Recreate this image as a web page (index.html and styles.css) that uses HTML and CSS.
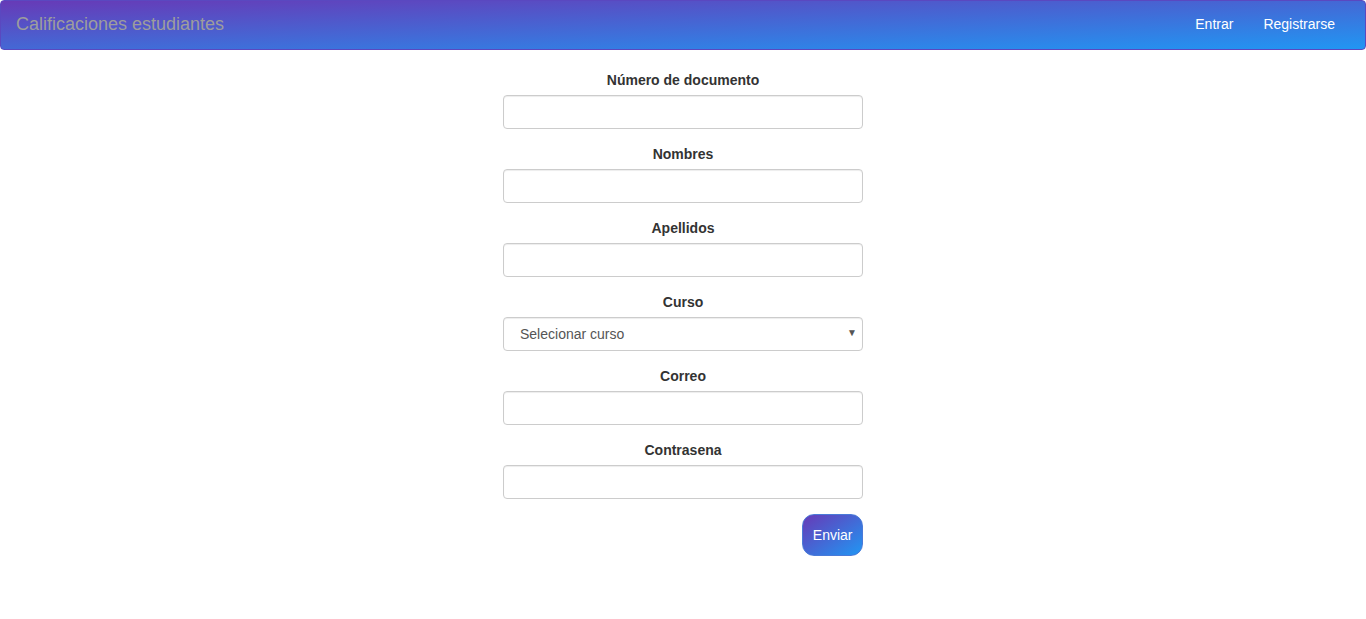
FILE: index.html
```html
<!DOCTYPE html>
<html lang="es">
<head>
<meta charset="utf-8">
<title>Calificaciones estudiantes</title>
<link rel="stylesheet" href="styles.css">
</head>
<body>
<nav class="navbar">
  <a class="brand" href="#">Calificaciones estudiantes</a>
  <ul class="nav-links">
    <li><a href="#">Entrar</a></li>
    <li><a href="#">Registrarse</a></li>
  </ul>
</nav>
<main class="content">
  <form class="form">
    <div class="group">
      <label for="doc">Número de documento</label>
      <input id="doc" type="text" class="control">
    </div>
    <div class="group">
      <label for="nom">Nombres</label>
      <input id="nom" type="text" class="control">
    </div>
    <div class="group">
      <label for="ape">Apellidos</label>
      <input id="ape" type="text" class="control">
    </div>
    <div class="group">
      <label for="cur">Curso</label>
      <div class="select-wrap">
        <select id="cur" class="control select">
          <option>Selecionar curso</option>
        </select>
        <span class="caret">&#9660;</span>
      </div>
    </div>
    <div class="group">
      <label for="cor">Correo</label>
      <input id="cor" type="email" class="control">
    </div>
    <div class="group">
      <label for="con">Contrasena</label>
      <input id="con" type="password" class="control">
    </div>
    <div class="actions">
      <button type="button" class="btn">Enviar</button>
    </div>
  </form>
</main>
</body>
</html>
```
FILE: styles.css
```css
* { box-sizing: border-box; }
html, body { margin: 0; padding: 0; }
body {
  font-family: "Liberation Sans", Arial, sans-serif;
  font-size: 14px;
  line-height: 20px;
  color: #333;
  background: #fff;
}
.navbar {
  height: 50px;
  display: flex;
  align-items: center;
  justify-content: space-between;
  padding: 0 15px;
  background: linear-gradient(to bottom right, #673ab7, #2196f3);
  border: 1px solid #5a48c0;
  border-radius: 4px;
  margin-bottom: 20px;
}
.brand {
  color: #9d9d9d;
  font-size: 18px;
  line-height: 20px;
  text-decoration: none;
  padding-bottom: 3px;
}
.nav-links {
  list-style: none;
  display: flex;
  margin: 0;
  padding: 0 0 2px 0;
}
.nav-links a {
  display: block;
  color: #fff;
  text-decoration: none;
  padding: 0 15px;
  line-height: 20px;
}
.content {
  display: flex;
  justify-content: center;
}
.form {
  width: 360px;
}
.group {
  margin-bottom: 15px;
  text-align: center;
}
.group label {
  display: block;
  font-weight: bold;
  margin-bottom: 5px;
  max-width: 100%;
}
.control {
  display: block;
  width: 100%;
  height: 34px;
  padding: 6px 12px;
  font-family: inherit;
  font-size: 14px;
  color: #555;
  background: #fff;
  border: 1px solid #ccc;
  border-radius: 4px;
  box-shadow: inset 0 1px 1px rgba(0,0,0,.075);
}
.select-wrap { position: relative; }
.select {
  appearance: none;
  -webkit-appearance: none;
  padding-left: 16px;
  text-align: left;
}
.caret {
  position: absolute;
  right: 6px;
  top: 10px;
  font-size: 10px;
  line-height: 12px;
  color: #555;
  pointer-events: none;
}
.actions {
  display: flex;
  justify-content: flex-end;
}
.btn {
  font-family: inherit;
  font-size: 14px;
  line-height: 20px;
  color: #fff;
  padding: 10px 9.5px;
  height: 42px;
  border: 1px solid #4a7ad8;
  border-radius: 12px;
  background: linear-gradient(to bottom right, #673ab7, #2196f3);
  cursor: pointer;
}
```
